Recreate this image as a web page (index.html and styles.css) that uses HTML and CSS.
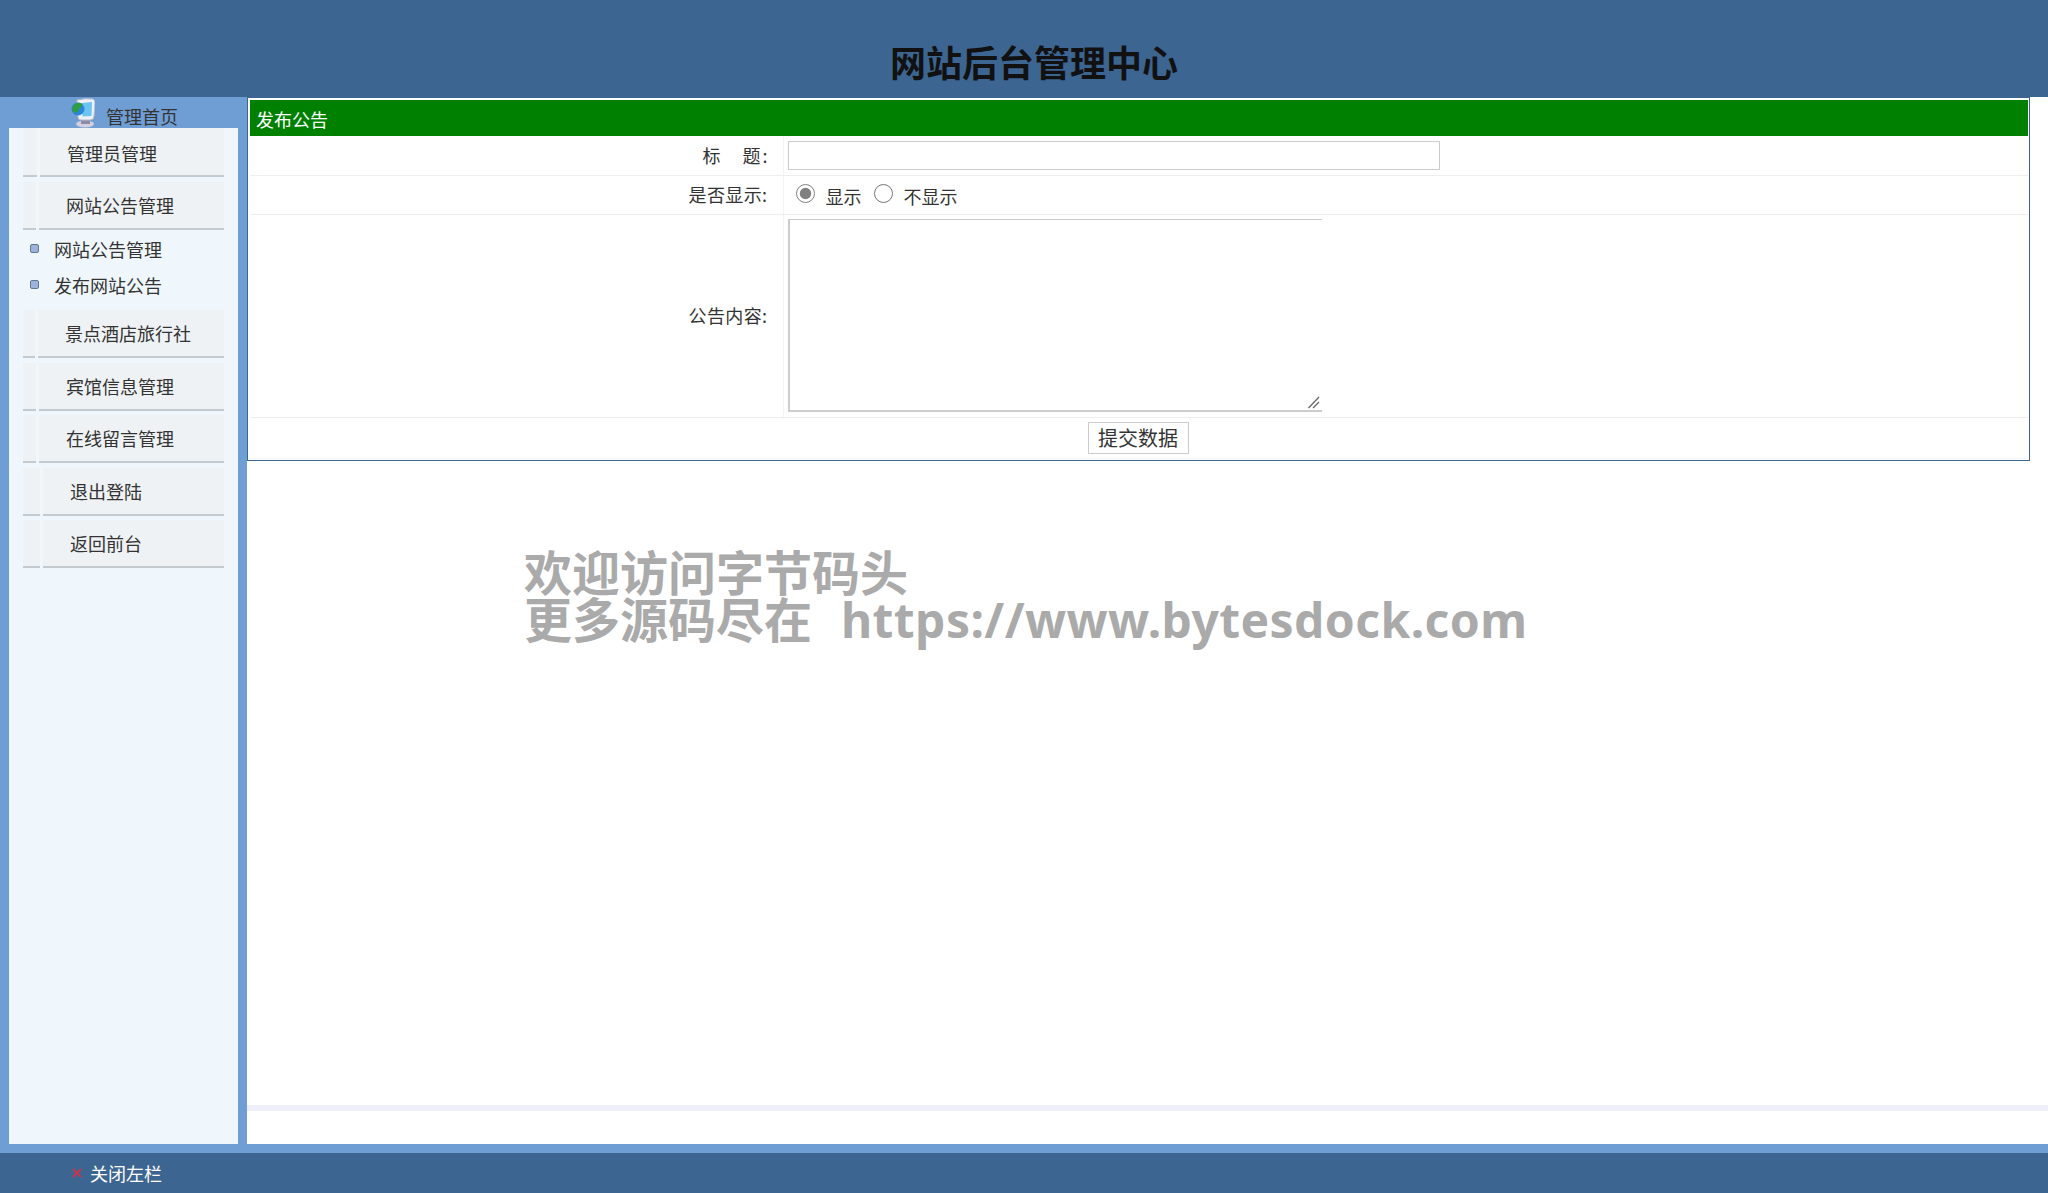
FILE: index.html
```html
<!DOCTYPE html>
<html lang="zh-CN">
<head>
<meta charset="utf-8">
<title>网站后台管理中心</title>
<link rel="stylesheet" href="styles.css">
</head>
<body>
<header class="top"><h1 class="site-title">网站后台管理中心</h1></header>
<div class="middle">
  <aside class="side">
    <div class="side-head">
      <svg class="home-icon" width="24" height="30" viewBox="0 0 24 30">
        <ellipse cx="14" cy="26" rx="9" ry="3.4" fill="#d3cfdf"/>
        <rect x="10" y="20" width="9" height="6" fill="#8f8ba6"/>
        <path d="M6 2 Q14 0 22 1 Q24 2 24 5 L23 18 Q23 22 19 22 L10 22 Q7 22 7 19Z" fill="#eef2f7" stroke="#b4bccb" stroke-width="1"/>
        <path d="M11 5 L21 4 L20.5 18 L11.5 18.5Z" fill="#6cc4f2"/>
        <circle cx="7" cy="11" r="6.5" fill="#2a86d6"/>
        <path d="M2 8 Q6 3 11 5.5 Q12 9 8 10 Q8 15 3 14.5 Q0 12 2 8Z" fill="#2f9e3f"/>
      </svg>
      <span class="home-link">管理首页</span>
    </div>
    <div class="side-body">
      <div class="menu-item cap-a"><span class="cap"></span><span class="menu-text">管理员管理</span></div>
      <div class="menu-item cap-b"><span class="cap"></span><span class="menu-text">网站公告管理</span></div>
      <ul class="sub-list">
        <li class="sub-row"><i class="dot"></i>网站公告管理</li>
        <li class="sub-row"><i class="dot"></i>发布网站公告</li>
      </ul>
      <div class="menu-item cap-c"><span class="cap"></span><span class="menu-text">景点酒店旅行社</span></div>
      <div class="menu-item cap-b"><span class="cap"></span><span class="menu-text">宾馆信息管理</span></div>
      <div class="menu-item cap-b"><span class="cap"></span><span class="menu-text">在线留言管理</span></div>
      <div class="menu-item cap-d"><span class="cap"></span><span class="menu-text">退出登陆</span></div>
      <div class="menu-item cap-d"><span class="cap"></span><span class="menu-text">返回前台</span></div>
    </div>
  </aside>
  <main class="main">
    <form class="panel">
      <div class="panel-title">发布公告</div>
      <table class="form-table">
        <tr class="row-title">
          <th>标　题:</th>
          <td><input class="title-input" type="text"></td>
        </tr>
        <tr class="row-show">
          <th>是否显示:</th>
          <td>
            <label class="radio"><input type="radio" name="show" checked><span>显示</span></label>
            <label class="radio"><input type="radio" name="show"><span>不显示</span></label>
          </td>
        </tr>
        <tr class="row-content">
          <th>公告内容:</th>
          <td class="area-cell">
            <textarea class="content-area"></textarea>
            <svg class="grip" width="12" height="13" viewBox="0 0 12 13"><path d="M0.5 12 L11 1 M5 12 L11 6" stroke="#666" stroke-width="1.3" fill="none"/></svg>
          </td>
        </tr>
        <tr class="row-submit">
          <td colspan="2"><button class="submit" type="button">提交数据</button></td>
        </tr>
      </table>
    </form>
    <div class="main-strip"></div>
    <div class="watermark">欢迎访问字节码头<br>更多源码尽在&nbsp; <span class="watermark-url">https://www.bytesdock.com</span></div>
  </main>
</div>
<footer class="bottom">
  <svg class="close-x" width="10" height="10" viewBox="0 0 10 10"><path d="M1 1 L9 9 M9 1 L1 9" stroke="#f0283c" stroke-width="1.6"/></svg>
  <span class="close-text">关闭左栏</span>
</footer>
</body>
</html>
```
FILE: styles.css
```css
* { box-sizing: border-box; }
html, body { height: 100%; }
body {
  margin: 0;
  height: 1193px;
  display: flex;
  flex-direction: column;
  overflow: hidden;
  background: #fff;
  color: #333;
  font: 18px/1.2 "Noto Sans CJK SC", "Liberation Sans", sans-serif;
}
.top {
  height: 97px;
  flex: none;
  background: #3d6591;
  display: flex;
  justify-content: center;
  padding: 36px 0 0 20px;
}
.site-title {
  margin: 0;
  color: #111;
  font-size: 36px;
  line-height: 50px;
  font-weight: 700;
}
.middle {
  flex: none;
  height: 1056px;
  display: flex;
  background: #6f9ed4;
  padding-bottom: 9px;
}
.side {
  width: 247px;
  flex: none;
  padding: 0 9px;
  display: flex;
  flex-direction: column;
}
.side-head {
  height: 31px;
  flex: none;
  display: flex;
  padding-left: 62px;
}
.home-icon { margin-top: 1px; }
.home-link { margin: 6px 0 0 11px; line-height: 26px; color: #333; }
.side-body {
  flex: 1;
  background: #eff7fd;
  padding: 0 14px;
}
.menu-item {
  height: 48px;
  margin-bottom: 4.5px;
  display: flex;
}
.cap {
  flex: none;
  background: #eff2f4;
  border-bottom: 2px solid #c4cbd0;
}
.menu-text {
  flex: 1;
  margin-left: 3px;
  background: #eff2f4;
  border-bottom: 2px solid #c4cbd0;
  line-height: 46px;
}
.cap-a { height: 49px; margin-bottom: 5px; }
.cap-a .cap { width: 14px; }
.cap-a .menu-text { padding-left: 27px; line-height: 50px; }
.cap-b .cap { width: 13px; }
.cap-b .menu-text { padding-left: 27px; }
.cap-c .cap { width: 12px; }
.cap-c .menu-text { padding-left: 27px; }
.cap-d .cap { width: 17px; }
.cap-d .menu-text { padding-left: 27px; }
.sub-list {
  list-style: none;
  margin: -4px 0 7.5px;
  padding: 0;
}
.sub-row {
  height: 36px;
  line-height: 36px;
  margin-left: -14px;
  padding-left: 45px;
  position: relative;
}
.dot {
  position: absolute;
  left: 21px;
  top: 13px;
  width: 9px;
  height: 9px;
  border-radius: 2px;
  background: #9db2dc;
  border: 1px solid #63798f;
}
.main {
  flex: 1;
  background: #fff;
  position: relative;
}
.panel {
  display: block;
  width: 1783px;
  height: 364px;
  border: 1px solid #3d6591;
  padding: 2px 1px 0 2px;
  background: #fff;
}
.panel-title {
  height: 36px;
  background: #008000;
  color: #fff;
  line-height: 38px;
  padding-left: 6px;
}
.form-table {
  width: 100%;
  border-collapse: collapse;
  table-layout: fixed;
}
.form-table th {
  width: 533px;
  font-weight: 400;
  text-align: right;
  letter-spacing: 0.4px;
  padding: 0 15px 0 0;
  border-right: 1px solid #f3f3f3;
  border-bottom: 1px solid #eeeeee;
}
.form-table td {
  padding: 0 0 0 4px;
  border-bottom: 1px solid #eeeeee;
}
.row-title { height: 39px; }
.row-show { height: 39px; }
.row-content { height: 203px; }
.row-submit { height: 41px; }
.form-table .row-title th { letter-spacing: 2px; padding: 1px 13px 0 0; }
.row-submit td { text-align: center; border-bottom: 1px solid #f6f6f6; padding: 0; }
.title-input {
  display: block;
  width: 652px;
  height: 29px;
  border: 1px solid #ccc;
  background: #fff;
  outline: none;
  margin-top: 1px;
}
.radio { display: inline-flex; align-items: flex-start; margin-left: 8px; }
.radio + .radio { margin-left: 8px; }
.radio input {
  margin: 2px 11px 0 0;
  width: 19px;
  height: 19px;
  accent-color: #808080;
}
.radio span { margin-top: 4px; }
.area-cell { position: relative; }
.content-area {
  display: block;
  width: 534px;
  height: 193px;
  border: 2px solid #ccc;
  border-right: 0;
  border-top-width: 1px;
  background: #fff;
  outline: none;
  resize: none;
}
.grip {
  position: absolute;
  left: 524px;
  top: 181px;
}
.submit {
  width: 101px;
  height: 32px;
  padding: 0;
  margin-right: 2px;
  border: 1px solid #ccc;
  background: #fff;
  color: #333;
  font: 20px/28px "Noto Sans CJK SC", sans-serif;
}
.main-strip {
  position: absolute;
  left: 0;
  right: 0;
  top: 1008px;
  height: 6px;
  background: #eeeffa;
}
.watermark {
  position: absolute;
  left: 277px;
  top: 452px;
  color: #aaaaaa;
  font-size: 48px;
  line-height: 47px;
  font-weight: 700;
  white-space: nowrap;
  font-family: "Noto Sans", "Noto Sans CJK SC", sans-serif;
}
.watermark-url { margin-left: 4px; letter-spacing: 0.43px; }
.bottom {
  flex: none;
  height: 40px;
  background: #3d6591;
  display: flex;
  align-items: center;
  padding-left: 72px;
  color: #fff;
}
.close-x { margin-right: 8px; flex: none; }
.close-text { line-height: 40px; }
```
